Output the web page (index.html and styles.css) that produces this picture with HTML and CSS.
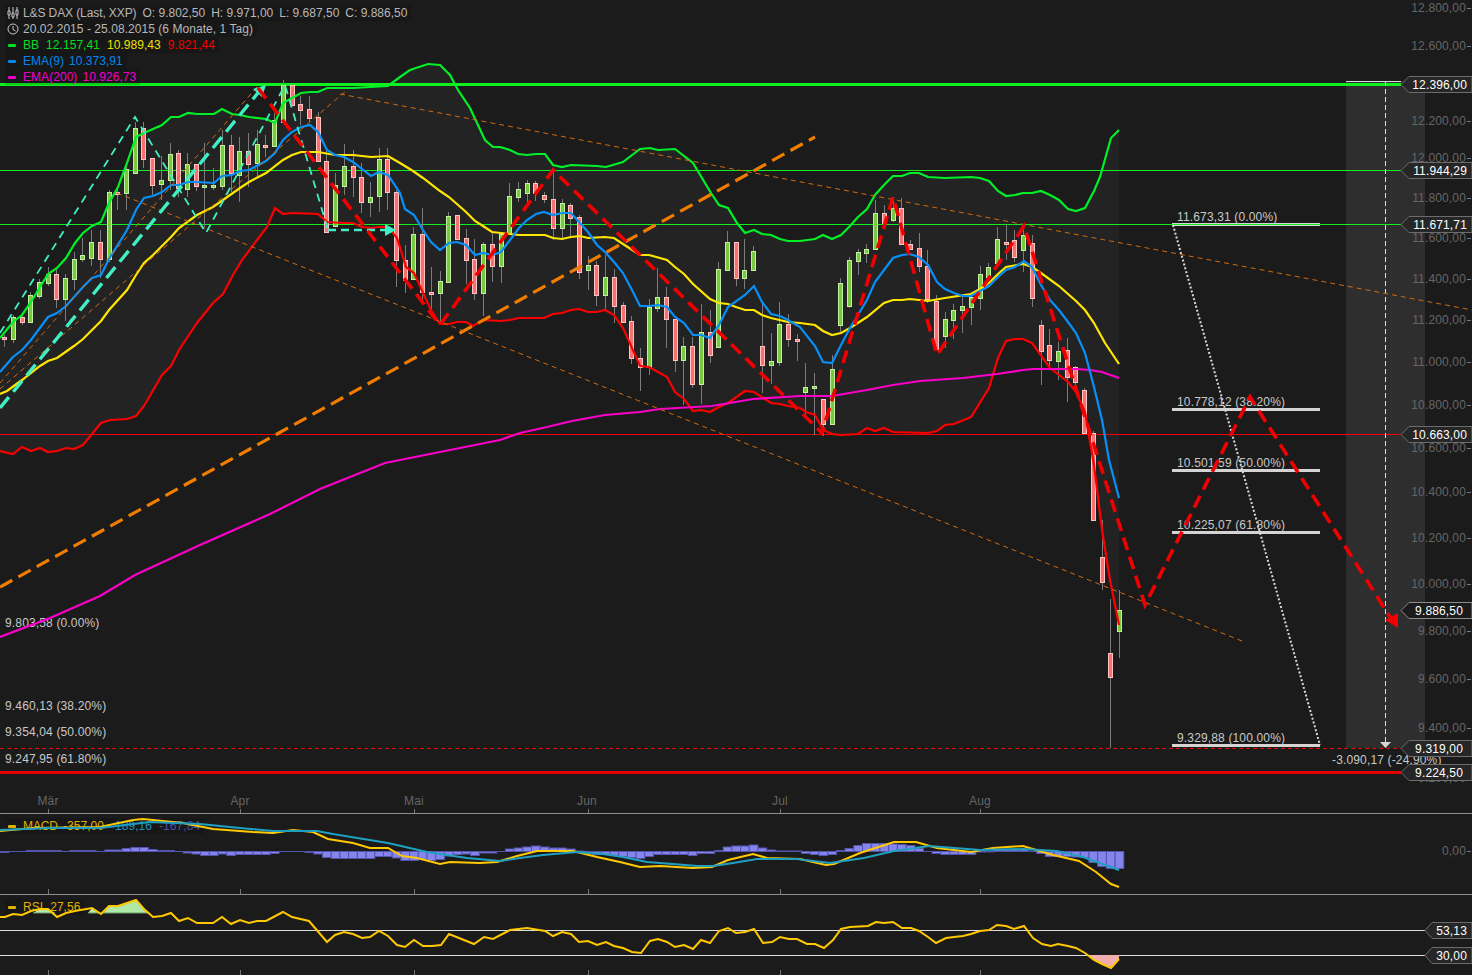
FILE: index.html
```html
<!DOCTYPE html>
<html lang="de">
<head>
  <meta charset="UTF-8">
  <title>L&amp;S DAX</title>
  <link rel="stylesheet" href="styles.css">
</head>
<body>
  <div class="chart">

    <section class="pane pane-main">
      <svg class="plot" viewBox="0 0 1472 813" width="1472" height="813">
        <rect class="shade" x="1346" y="81" width="79" height="667"/>
        <polygon id="band" class="band"/>

        <g class="axis">
          <text x="1466" y="12">12.800,00</text>
          <text x="1466" y="50">12.600,00</text>
          <text x="1466" y="125">12.200,00</text>
          <text x="1466" y="162">12.000,00</text>
          <text x="1466" y="202">11.800,00</text>
          <text x="1466" y="242">11.600,00</text>
          <text x="1466" y="283">11.400,00</text>
          <text x="1466" y="324">11.200,00</text>
          <text x="1466" y="366">11.000,00</text>
          <text x="1466" y="409">10.800,00</text>
          <text x="1466" y="452">10.600,00</text>
          <text x="1466" y="496">10.400,00</text>
          <text x="1466" y="542">10.200,00</text>
          <text x="1466" y="588">10.000,00</text>
          <text x="1466" y="635">9.800,00</text>
          <text x="1466" y="683">9.600,00</text>
          <text x="1466" y="732">9.400,00</text>
          <text x="1466" y="782">9.200,00</text>
        </g>
        <path class="tick" d="M1467 8.5h4M1467 46.5h4M1467 121.5h4M1467 158.5h4M1467 198.5h4M1467 238.5h4M1467 279.5h4M1467 320.5h4M1467 362.5h4M1467 405.5h4M1467 448.5h4M1467 492.5h4M1467 538.5h4M1467 584.5h4M1467 631.5h4M1467 679.5h4M1467 728.5h4"/>

        <g class="axis axis-x">
          <text x="48" y="805">Mär</text>
          <text x="240" y="805">Apr</text>
          <text x="414" y="805">Mai</text>
          <text x="587" y="805">Jun</text>
          <text x="780" y="805">Jul</text>
          <text x="980" y="805">Aug</text>
        </g>
        <path class="tick" d="M48.5 809v4M240.5 809v4M414.5 809v4M588.5 809v4M780.5 809v4M980.5 809v4"/>

        <!-- horizontale linien -->
        <path class="hline-green" d="M0 170.5H1401M0 224.5H1401"/>
        <path class="hline-green-bold" d="M0 84.5H1401"/>
        <path class="hline-red" d="M0 434.5H1401"/>
        <path class="hline-red-bold" d="M0 772.5H1401"/>
        <path class="hline-red-dash" d="M0 748.5H1401"/>
        <path class="range-edge" d="M1346 81.5H1401"/>
        <path class="range-line" d="M1385.5 81V742"/>
        <polygon class="range-arrow" points="1380,742 1391,742 1385.5,748"/>

        <!-- fibonacci -->
        <path class="fib-bar" d="M1172 224.5H1320M1172 409.5H1320M1172 470.5H1320M1172 532.5H1320M1172 745.5H1320"/>
        <path class="hline-green" d="M1172 224.5H1320"/>
        <path class="fib-link" d="M1173 225L1320 745"/>
        <g class="label">
          <text x="1177" y="221">11.673,31 (0.00%)</text>
          <text x="1177" y="406">10.778,12 (38.20%)</text>
          <text x="1177" y="467">10.501,59 (50.00%)</text>
          <text x="1177" y="529">10.225,07 (61.80%)</text>
          <text x="1177" y="742">9.329,88 (100.00%)</text>
          <text x="5" y="627">9.803,58 (0.00%)</text>
          <text x="5" y="710">9.460,13 (38.20%)</text>
          <text x="5" y="736">9.354,04 (50.00%)</text>
          <text x="5" y="763">9.247,95 (61.80%)</text>
          <text x="1332" y="764">-3.090,17 (-24.90%)</text>
        </g>

        <g id="candles"></g>
        <g id="lines"></g>

        <!-- zeichnungen -->
        <path class="trend-thin" d="M340 94L1472 310M117 193L1242 641M0 383L257 87M0 389L347 90"/>
        <path class="trend-orange" d="M0 587L815 137"/>
        <path class="wave-cyan" d="M0 333L135 117L206 233L285 85L328 230"/>
        <path class="wave-cyan-flat" d="M328 230H387"/>
        <path class="wave-cyan-bold" d="M0 408L262 88"/>
        <polygon class="arrow-cyan" points="385,224 396,230 385,236"/>
        <polygon class="arrow-cyan" points="253,89 266,85 262,97"/>
        <path class="wave-red" d="M258 88L440 325L553 170L822 433L893 197L937 355L1024 226L1145 605L1250 397L1392 620"/>
        <polygon class="arrow-red" points="1385,620 1398,613 1398,628"/>

        <!-- preisschilder -->
        <g class="tag">
          <path d="M1401 84.5l8-8h63v16h-63z"/>
          <text x="1467" y="89">12.396,00</text>
          <path d="M1401 170.5l8-8h63v16h-63z"/>
          <text x="1467" y="175">11.944,29</text>
          <path d="M1401 224.5l8-8h63v16h-63z"/>
          <text x="1467" y="229">11.671,71</text>
          <path d="M1401 434.5l8-8h63v16h-63z"/>
          <text x="1467" y="439">10.663,00</text>
          <path class="tag-last" d="M1401 610.5l8-8h63v16h-63z"/>
          <text x="1463" y="615">9.886,50</text>
          <path d="M1401 748.5l8-8h63v16h-63z"/>
          <text x="1463" y="753">9.319,00</text>
          <path d="M1401 772.5l8-8h63v16h-63z"/>
          <text x="1463" y="777">9.224,50</text>
        </g>
      </svg>

      <div class="legend">
        <div class="legend-row legend-head">
          <svg class="legend-icon" viewBox="0 0 12 12" width="12" height="12">
            <path d="M2 0V12M6 0V12M10 0V12"/>
            <path class="icon-body" d="M1 4h2v4H1zM5 6h2v4H5zM9 3h2v5H9z"/>
          </svg>
          <span class="txt name">L&amp;S DAX (Last, XXP)</span>
          <span class="txt">O: 9.802,50</span>
          <span class="txt">H: 9.971,00</span>
          <span class="txt">L: 9.687,50</span>
          <span class="txt">C: 9.886,50</span>
        </div>
        <div class="legend-row">
          <svg class="legend-icon" viewBox="0 0 12 12" width="12" height="12">
            <circle cx="6" cy="6" r="5"/>
            <path d="M6 3V6.5L8.5 8"/>
          </svg>
          <span class="txt">20.02.2015 - 25.08.2015 (6 Monate, 1 Tag)</span>
        </div>
        <div class="legend-row">
          <i class="dash c-green"></i>
          <span class="c-green">BB</span>
          <span class="c-green">12.157,41</span>
          <span class="c-yellow">10.989,43</span>
          <span class="c-red">9.821,44</span>
        </div>
        <div class="legend-row">
          <i class="dash c-blue"></i>
          <span class="c-blue">EMA(9)</span>
          <span class="c-blue tight">10.373,91</span>
        </div>
        <div class="legend-row">
          <i class="dash c-magenta"></i>
          <span class="c-magenta">EMA(200)</span>
          <span class="c-magenta tight">10.926,73</span>
        </div>
      </div>
    </section>

    <section class="pane pane-sub">
      <div class="legend legend-sub">
        <div class="legend-row">
          <i class="dash c-gold"></i>
          <span class="c-gold name">MACD</span>
          <span class="c-gold tight">-357,00</span>
          <span class="c-teal">-189,16</span>
          <span class="c-violet">-167,84</span>
        </div>
      </div>
      <svg class="plot" viewBox="0 814 1472 80" width="1472" height="80">
        <g class="axis"><text x="1466" y="855">0,00</text></g>
        <path class="tick" d="M1467 851.5h4M48.5 889v5M240.5 889v5M414.5 889v5M588.5 889v5M780.5 889v5M980.5 889v5"/>
        <path class="hist-zero" d="M0 851.5H1124"/>
        <g id="histogram"></g>
        <g id="macd"></g>
      </svg>
    </section>

    <section class="pane pane-sub">
      <div class="legend legend-sub">
        <div class="legend-row">
          <i class="dash c-gold"></i>
          <span class="c-gold">RSI</span>
          <span class="c-gold">27,56</span>
        </div>
      </div>
      <svg class="plot" viewBox="0 895 1472 80" width="1472" height="80">
        <path class="tick" d="M48.5 970v5M240.5 970v5M414.5 970v5M588.5 970v5M780.5 970v5M980.5 970v5"/>
        <path class="rsi-level" d="M0 930.5H1430M0 955.5H1430"/>
        <path class="rsi-over" d="M33 913L40 909L48 909L55 913ZM88 913L92 908L99 913ZM103 913L109 906L118 906L127 903L136 900L144 909L149 913Z"/>
        <path class="rsi-over-edge" d="M33 913H55M88 913H99M103 913H149"/>
        <path class="rsi-under" d="M1087 955L1094 960L1102 964L1111 968L1119 959V955Z"/>
        <g id="rsi"></g>
        <g class="tag">
          <path d="M1425 930.5l7-8h40v16h-40z"/>
          <text x="1467" y="935">53,13</text>
          <path d="M1425 955.5l7-8h40v16h-40z"/>
          <text x="1467" y="960">30,00</text>
        </g>
      </svg>
    </section>

  </div>
  <script src="chart.js"></script>
</body>
</html>
```

FILE: styles.css
```css
* {
  box-sizing: border-box;
}
html, body {
  margin: 0;
  height: 100%;
  overflow: hidden;
  background: #1b1b1b;
}
body {
  font-family: "Liberation Sans", Arial, sans-serif;
  font-size: 12px;
}
.chart {
  display: flex;
  flex-direction: column;
  width: 1472px;
  height: 975px;
}
.pane {
  position: relative;
}
.pane-main {
  height: 813px;
}
.pane-sub {
  height: 81px;
  border-top: 1px solid #8f8f8f;
}
.plot {
  display: block;
  position: relative;
}
.plot text {
  font-family: "Liberation Sans", Arial, sans-serif;
  font-size: 12px;
  letter-spacing: 0.15px;
}
.plot path, .plot polyline {
  fill: none;
}

/* legende */
.legend {
  position: absolute;
  top: 5px;
  left: 5px;
  display: flex;
  flex-direction: column;
  align-items: flex-start;
}
.legend-sub {
  top: 4px;
}
.legend-row {
  display: flex;
  align-items: center;
  gap: 7px;
  height: 16px;
  padding: 0 4px 0 3px;
  background: rgba(0, 0, 0, 0.14);
  color: #b4b4b4;
  line-height: 16px;
  letter-spacing: 0.05px;
}
.legend-head {
  gap: 6px;
  letter-spacing: 0;
}
.legend-icon {
  width: 12px;
  height: 12px;
  margin-left: -1px;
  margin-right: -3px;
  fill: none;
  stroke: #c8c8c8;
  stroke-width: 1;
}
.legend-head .legend-icon {
  margin-right: -2px;
}
.legend-icon .icon-body {
  fill: #1b1b1b;
}
.legend-row .txt {
  color: #b8b8b8;
}
.legend-row .name {
  letter-spacing: -0.1px;
}
.legend-row .tight {
  margin-left: -2px;
}
.dash {
  display: block;
  width: 8px;
  height: 3px;
  border-radius: 1px;
  background: currentColor;
}
.c-green { color: #00e020; }
.c-yellow { color: #f0e000; }
.c-red { color: #f00000; }
.c-blue { color: #0088f0; }
.c-magenta { color: #f000d0; }
.c-gold { color: #e0b000; }
.c-teal { color: #2090b8; }
.c-violet { color: #5050a8; }

/* achsen */
.axis text {
  fill: #666;
  text-anchor: end;
}
.axis-x text {
  text-anchor: middle;
}
.plot .tick {
  stroke: #777;
  stroke-width: 1;
}
.label text {
  fill: #c8c8c8;
}
.plot .shade {
  fill: #2e2e2e;
}
.band {
  fill: #232323;
}

/* horizontale linien */
.plot .hline-green { stroke: #10f020; stroke-width: 1; }
.plot .hline-green-bold { stroke: #10f020; stroke-width: 3; }
.plot .hline-red { stroke: #f00000; stroke-width: 1; }
.plot .hline-red-bold { stroke: #e80000; stroke-width: 3; }
.plot .hline-red-dash { stroke: #f00000; stroke-width: 1; stroke-dasharray: 4 3; }
.plot .range-edge { stroke: #d8d8d8; stroke-width: 1; }
.plot .range-line { stroke: #e0e0e0; stroke-width: 1; stroke-dasharray: 5 3; }
.range-arrow { fill: #d8d8d8; }
.plot .fib-bar { stroke: #d4d4d4; stroke-width: 3; }
.plot .fib-link { stroke: #d8d8d8; stroke-width: 2; stroke-dasharray: 2 2; }

/* kerzen */
.wick { stroke: #7c7c7c; stroke-width: 1; }
.body-up { fill: #78c840; stroke: #c4f0a4; stroke-width: 1; }
.body-down { fill: #f87070; stroke: #ffc4c4; stroke-width: 1; }

/* indikatoren */
.plot .bb-upper { stroke: #00f028; stroke-width: 2.2; }
.plot .bb-middle { stroke: #ffe600; stroke-width: 2.2; }
.plot .bb-lower { stroke: #fa0000; stroke-width: 2.2; }
.plot .ema-9 { stroke: #0890f8; stroke-width: 2.2; }
.plot .ema-200 { stroke: #fa00c8; stroke-width: 2.2; }
.plot .macd-line { stroke: #ffc800; stroke-width: 2; }
.plot .macd-signal { stroke: #20a0c0; stroke-width: 2; }
.plot .rsi-line { stroke: #ffc800; stroke-width: 2; }
.hist-bar { fill: #8484ec; stroke: #5454ac; stroke-width: 1; }
.plot .hist-zero { stroke: #5454ac; stroke-width: 1; }
.plot .rsi-level { stroke: #dcdcdc; stroke-width: 1; }
.plot .rsi-over { fill: #b0e8a8; }
.plot .rsi-over-edge { stroke: #6f9a6c; stroke-width: 1; }
.plot .rsi-under { fill: #f0aeae; }

/* zeichnungen */
.plot .trend-thin { stroke: #d06a10; stroke-width: 1; stroke-dasharray: 5 4; }
.plot .trend-orange { stroke: #f07c00; stroke-width: 3.2; stroke-dasharray: 14 7; }
.plot .wave-cyan { stroke: #40f0c4; stroke-width: 1.8; stroke-dasharray: 8 6; }
.plot .wave-cyan-flat { stroke: #40f0c4; stroke-width: 2.4; stroke-dasharray: 8 5; }
.plot .wave-cyan-bold { stroke: #40f0c4; stroke-width: 3.4; stroke-dasharray: 14 7; }
.arrow-cyan { fill: #40f0c4; }
.plot .wave-red { stroke: #f00000; stroke-width: 3.6; stroke-dasharray: 13 7; }
.arrow-red { fill: #f00000; }

/* preisschilder */
.plot .tag path {
  fill: #262626;
  stroke: #6c6c6c;
  stroke-width: 1;
}
.plot .tag .tag-last {
  fill: #1b1b1b;
  stroke: #8c8c8c;
}
.tag text {
  fill: #fff;
  text-anchor: end;
}
```

FILE: chart.js
```js
const NS = "http://www.w3.org/2000/svg";
const stepX = 8.71;
const startX = 4.6;

// kerzen: [body oben, body unten, docht oben, docht unten, farbe]
const candles = [
  [337,338.5,335,347,"r"],[317,339,315,343,"g"],[317,322,315,325,"r"],[295,322,292,322,"g"],[282,296,279,299,"g"],
  [274,283,267,286,"g"],[274,299,268,308,"r"],[278,299,274,321,"g"],[259,279,252,290,"g"],[255,259,238,262,"g"],
  [242,258,230,266,"g"],[242,259,230,278,"r"],[192,259,190,262,"g"],[192,193.5,187,210,"r"],[169,193,163,210,"g"],
  [128,173,122,173,"g"],[128,159,122,168,"r"],[158,185,158,195,"r"],[180,184,156,200,"g"],[154,180,143,190,"g"],
  [153,188,150,197,"r"],[164,189,153,197,"g"],[164,186,164,191,"r"],[185,186.5,143,227,"g"],[184.5,186,168,190,"g"],
  [145,186,130,190,"g"],[145,173,135,192,"r"],[151,175,137,202,"g"],[151,164,133,187,"r"],[144,163,130,177,"g"],
  [144.5,146,135,157,"r"],[120,146,113,146,"g"],[85,122,80,122,"g"],[85,105,85,105,"r"],[104,110,96,125,"r"],
  [109,118,96,122,"r"],[117,161,112,161,"r"],[161,232,150,232,"r"],[185,226,173,226,"g"],[166,186,144,195,"g"],
  [166,177,150,197,"r"],[177,202,163,213,"r"],[197,202,182,217,"g"],[159,196,148,212,"g"],[159,192,148,210,"r"],
  [192,260,190,287,"r"],[260,280,245,293,"r"],[234,279,227,280,"g"],[234,292,208,300,"r"],[291.5,293,267,310,"r"],
  [281,293,271,325,"g"],[216,282,212,282,"g"],[215,239,215,239,"r"],[238,260,229,284,"r"],[259,293,239,300,"r"],
  [244,293,242,316,"g"],[244,266,233,282,"r"],[234,266,234,283,"g"],[196,234,183,234,"g"],[189,197,182,202,"g"],
  [183,193,180,204,"g"],[183,193,181,201,"r"],[195,199,192,203,"r"],[199,228,170,240,"r"],[203,228,199,238,"g"],
  [205,218,203,237,"r"],[217,272,215,279,"r"],[265,270,256,290,"g"],[265,295,261,306,"r"],[277,295,255,310,"g"],
  [277,306,269,323,"r"],[305,322,302,322,"r"],[321,358,316,364,"r"],[358,367,348,391,"r"],[307,367,299,375,"g"],
  [297,308,268,312,"g"],[297,319,287,348,"r"],[319,360,319,372,"r"],[346,360,337,405,"g"],[346,384,337,388,"r"],
  [332,384,304,404,"g"],[332,355,310,363,"r"],[269,347,262,347,"g"],[242,270,231,270,"g"],[242,278,242,286,"r"],
  [270,278,239,289,"g"],[251,270,246,270,"g"],[346,365,303,393,"r"],[361,365,333,384,"g"],[324,362,302,366,"g"],
  [324,339,314,347,"r"],[338.5,340,334,361,"r"],[387,392,363,418,"g"],[385.5,387,373,435,"g"],[399,424,399,436,"r"],
  [369,424,355,424,"g"],[283,325,278,332,"g"],[260,306,257,308,"g"],[252,261,249,275,"g"],[249,253,244,263,"g"],
  [213,249,200,249,"g"],[213,223,205,228,"r"],[208,220,197,222,"g"],[208,244,198,244,"r"],[244,249,240,249,"r"],
  [248,266,233,272,"r"],[266,299,250,303,"r"],[301,349,295,349,"r"],[319,336,312,348,"g"],[310,320,304,339,"g"],
  [306,310,297,333,"g"],[297,307,293,325,"g"],[274,298,266,310,"g"],[267,277,263,281,"g"],[239,263,227,263,"g"],
  [241.5,243,225,260,"r"],[240,257,230,262,"r"],[235,250,225,272,"g"],[243,298,235,307,"r"],[325,351,320,385,"r"],
  [345,360,329,368,"r"],[351,361,342,380,"g"],[350,377,338,402,"r"],[367,382,366,387,"r"],[390,433,388,433,"r"],
  [433,520,431,520,"r"],[557,582,520,590,"r"],[653,677,599,748,"r"],[610,631,590,658,"g"]
];

// macd histogramm, positiv = nach oben
const histogram = [
  -1,0,0,1,1,1,1,0,1,1,1,0,1.5,1.5,3,4,4,2,1,1,0,-1.5,-2.5,-4,-4,-2.5,-4,-3,-3,-3,-3,-2,0,0,0,-1,
  -2.5,-6,-7,-7,-7,-7,-7,-5,-5,-6.5,-9,-9,-8,-9,-8,-4.5,-3,-2.5,-4,-1.5,-1.5,0,2.5,3.5,4.5,5.5,4.5,3.5,3.5,2.5,
  0.5,0,-3,-3,-4,-5,-6,-7,-5,-3,-3,-3,-3,-4,-2,-2,1,4.5,5.5,5.5,6.5,3.5,1.5,0.5,0.5,0.5,-2,-3,-4,-3,
  1,3,6,8,8,8,7.5,7,6,3,0,-2,-3,-3,-3,-3,-0.5,-0.5,1.5,1.5,1.5,1.5,0,-2,-5,-5,-5,-5.5,-6,-11,-15,-17,-17
];

const bbUpper = [0,338,13,322,22,315,31,302,40,287,48,274,57,268,66,258,75,243,83,233,92,226,101,222,109,203,118,187,127,163,136,137,144,133,153,129,162,125,171,117,179,117,188,113,197,114,214,114,222,109,232,114,240,115,249,117,266,119,275,123,283,103,292,98,301,93,310,92,318,92,327,88,353,88,388,86,400,77,410,70,428,64,440,65,450,75,458,90,470,108,485,140,493,147,500,147,510,150,518,154,527,155,536,154,545,154,553,165,562,167,571,165,597,166,606,167,623,162,640,149,650,148,658,150,675,149,693,163,702,178,711,193,719,205,728,208,737,223,745,233,754,230,762,234,771,235,780,239,788,241,800,241,815,239,823,235,832,239,841,235,850,226,858,217,867,209,875,195,884,185,893,176,902,176,910,173,919,173,928,177,945,178,971,177,980,178,989,181,998,191,1006,196,1015,195,1023,193,1032,193,1041,191,1050,195,1059,200,1068,209,1076,211,1085,208,1094,191,1100,177,1111,138,1119,130];
const bbMiddle = [0,394,7,391,22,380,40,366,48,361,57,358,74,346,83,339,101,321,109,310,127,290,136,275,144,263,153,255,171,237,179,228,197,215,213,207,223,200,240,188,249,182,266,173,283,160,292,155,301,152,318,152,335,155,353,155,371,157,388,156,400,163,413,171,423,178,440,191,449,197,466,212,475,221,483,226,492,232,501,233,510,234,519,235,545,235,553,238,562,239,571,237,580,236,588,238,605,237,614,238,623,244,640,255,649,255,667,260,675,267,684,274,693,284,710,299,719,303,728,304,736,307,745,310,754,310,762,315,771,318,788,322,800,323,815,325,823,331,832,335,841,333,850,328,867,317,884,303,893,300,902,300,910,299,928,301,945,298,971,294,980,289,989,283,998,274,1006,267,1023,264,1032,267,1041,273,1059,286,1068,294,1076,301,1085,310,1094,323,1105,343,1119,364];
const bbLower = [0,451,13,454,22,447,31,451,40,448,48,452,57,451,66,448,74,449,83,445,101,423,110,420,127,419,136,416,144,406,162,375,171,366,179,350,187,338,197,323,213,303,223,294,233,275,242,260,267,227,275,208,283,214,292,213,318,214,327,222,344,223,353,223,362,227,371,228,379,227,388,227,397,238,406,267,414,273,423,293,431,310,440,324,449,324,457,322,466,322,473,326,483,320,501,321,510,320,519,318,544,318,553,314,562,313,571,310,579,309,588,312,597,312,605,310,614,315,623,328,632,348,640,366,649,367,658,372,667,377,675,392,684,399,693,411,701,410,710,412,719,407,728,403,745,391,754,392,771,403,780,404,788,406,800,408,806,412,815,415,823,430,832,434,841,435,858,434,867,428,875,431,884,428,893,432,928,433,937,431,945,425,954,424,971,417,989,388,998,358,1006,341,1015,339,1023,339,1032,343,1050,368,1068,382,1076,392,1085,412,1094,465,1102,530,1110,580,1119,625];
const ema9 = [0,372,13,357,22,350,31,340,48,317,57,313,66,306,83,287,92,278,101,275,109,259,127,230,136,210,144,198,153,196,162,192,171,185,179,185,188,182,197,182,214,183,222,176,232,175,240,171,249,170,266,161,275,153,283,140,292,132,301,127,310,125,318,132,327,150,335,155,344,157,353,162,371,176,379,172,388,175,400,193,405,209,414,215,423,230,431,242,440,250,449,243,457,242,466,245,475,255,483,253,492,255,501,252,510,240,519,228,527,220,536,214,544,212,553,215,562,213,571,213,579,222,588,232,597,245,605,252,614,262,623,273,632,290,640,306,649,306,658,305,667,307,675,317,684,323,693,335,701,335,710,338,719,325,728,307,745,295,754,286,762,302,771,314,780,316,788,320,800,327,815,346,823,362,832,363,841,345,850,328,867,300,875,282,893,258,902,255,910,254,919,257,928,265,937,282,945,289,954,293,963,296,971,296,980,291,989,286,998,277,1006,270,1015,267,1024,261,1032,267,1041,285,1050,300,1059,310,1068,322,1076,333,1085,353,1094,387,1102,420,1109,460,1119,498];
const ema200 = [0,637,50,618,100,596,135,575,200,545,270,514,320,489,385,463,440,452,490,442,500,440,520,433,547,427,572,421,605,415,640,412,660,409,712,406,753,399,800,396,832,396,867,390,893,385,920,381,963,378,997,374,1023,370,1033,369,1077,369,1090,370,1102,372,1119,378];

const macdSignal = [0,830,50,828,100,828,150,822,200,824,240,828,273,831,317,831,333,834,388,843,427,852,467,858,500,861,520,858,543,855,577,852,603,854,623,857,647,862,673,864,697,866,713,866,733,863,757,859,797,859,830,863,864,858,894,851,929,846,980,850,1023,849,1057,851,1083,857,1119,870];
const macdLine = [0,831,33,828,100,827,133,820,143,819,183,823,213,829,253,832,273,833,293,830,313,832,328,839,353,843,370,848,388,848,402,856,417,858,440,864,450,862,480,863,497,862,517,856,537,851,573,851,597,857,620,862,640,867,660,866,693,868,712,867,728,860,753,854,767,858,800,859,826,865,834,864,860,853,894,842,916,842,937,848,971,852,993,848,1023,846,1053,855,1079,861,1096,872,1111,884,1119,887];
const rsi = [0,917,5,917,13,914,22,915,31,911,40,909,48,909,57,917,66,913,75,911,92,908,101,914,109,906,118,906,127,903,136,900,144,909,153,917,162,916,171,913,179,921,188,918,197,923,213,923,222,917,231,924,240,920,249,923,257,921,266,921,283,912,292,917,309,921,327,942,335,935,344,932,353,934,362,938,370,937,379,931,388,936,397,945,405,947,414,940,423,946,432,946,441,945,449,934,474,944,484,937,493,939,510,930,527,928,545,931,553,936,562,932,571,934,579,942,588,941,597,945,606,942,614,946,623,948,632,952,641,953,650,941,658,939,667,942,675,947,684,945,693,949,701,940,710,943,719,931,728,928,736,933,745,932,754,929,763,943,772,942,780,937,789,939,797,939,807,944,815,944,824,948,833,940,841,929,850,927,868,926,876,922,884,923,893,922,902,928,911,928,919,931,928,937,936,943,946,938,954,937,963,936,971,934,980,931,989,930,997,925,1006,926,1014,929,1024,926,1033,938,1042,944,1051,946,1058,944,1068,946,1076,948,1085,953,1094,960,1102,964,1111,968,1119,959];

function make(parent, tag, attrs) {
  const el = document.createElementNS(NS, tag);
  for (const key in attrs) el.setAttribute(key, attrs[key]);
  parent.appendChild(el);
  return el;
}

function pairs(list) {
  const out = [];
  for (let i = 0; i < list.length; i += 2) out.push(list[i] + "," + list[i + 1]);
  return out;
}

function drawLine(id, list, cls) {
  make(document.getElementById(id), "polyline", { class: cls, points: pairs(list).join(" ") });
}

// flaeche zwischen den baendern
const lowerPts = pairs(bbLower).reverse();
document.getElementById("band").setAttribute("points", pairs(bbUpper).concat(lowerPts).join(" "));

const candleGroup = document.getElementById("candles");
candles.forEach((c, i) => {
  const x = Math.floor(startX + stepX * i) + 0.5;
  make(candleGroup, "line", { class: "wick", x1: x, x2: x, y1: c[2], y2: c[3] });
  make(candleGroup, "rect", {
    class: c[4] === "g" ? "body-up" : "body-down",
    x: x - 2, width: 4, y: Math.round(c[0]) + 0.5, height: Math.max(1, Math.round(c[1] - c[0]))
  });
});

drawLine("lines", bbUpper, "bb-upper");
drawLine("lines", bbMiddle, "bb-middle");
drawLine("lines", bbLower, "bb-lower");
drawLine("lines", ema200, "ema-200");
drawLine("lines", ema9, "ema-9");

const histGroup = document.getElementById("histogram");
histogram.forEach((v, i) => {
  if (v === 0) return;
  const x = startX + stepX * i - stepX / 2;
  const h = Math.abs(v);
  make(histGroup, "rect", {
    class: "hist-bar",
    x: x.toFixed(1), width: stepX.toFixed(2),
    y: v > 0 ? 851.5 - h : 851.5,
    height: h
  });
});

drawLine("macd", macdLine, "macd-line");
drawLine("macd", macdSignal, "macd-signal");
drawLine("rsi", rsi, "rsi-line");
```
